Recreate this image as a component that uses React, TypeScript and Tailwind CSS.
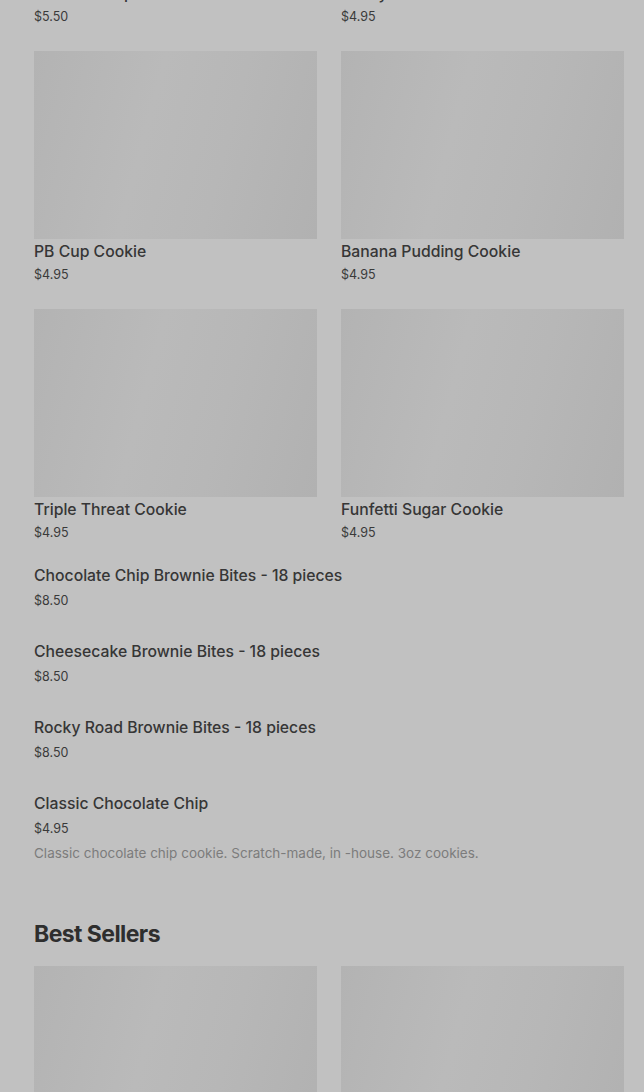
const cookies = [
  { name: 'Cookie Sampler Box', price: '$5.50' },
  { name: 'Rocky Road Marshmallow', price: '$4.95' },
  { name: 'PB Cup Cookie', price: '$4.95' },
  { name: 'Banana Pudding Cookie', price: '$4.95' },
  { name: 'Triple Threat Cookie', price: '$4.95' },
  { name: 'Funfetti Sugar Cookie', price: '$4.95' },
];

const listItems = [
  { name: 'Chocolate Chip Brownie Bites - 18 pieces', price: '$8.50' },
  { name: 'Cheesecake Brownie Bites - 18 pieces', price: '$8.50' },
  { name: 'Rocky Road Brownie Bites - 18 pieces', price: '$8.50' },
  {
    name: 'Classic Chocolate Chip',
    price: '$4.95',
    description: 'Classic chocolate chip cookie. Scratch-made, in -house. 3oz cookies.',
  },
];

const Placeholder = () => (
  <div className="h-[188px] w-full bg-[linear-gradient(105deg,#b3b3b3_0%,#bababa_40%,#b7b7b7_65%,#b1b1b1_100%)]" />
);

const Card = ({ name, price, noImage = false }: { name: string; price: string; noImage?: boolean }) => (
  <div className="flex flex-col">
    {!noImage && <Placeholder />}
    <div className="text-[15.75px] leading-[26px] font-medium text-[#363636] whitespace-nowrap">{name}</div>
    <div className="text-[12.5px] leading-[20px] text-[#3a3a3a]">{price}</div>
  </div>
);

export default function App() {
  return (
    <div
      className="min-h-[1092px] overflow-hidden bg-[#c1c1c1] pl-[34px] pr-[20px]"
      style={{ fontFamily: 'Inter, "Noto Sans", sans-serif' }}
    >
      <div className="-mt-[19px] grid grid-cols-2 gap-x-[24px] gap-y-[24px]">
        <Card name={cookies[0].name} price={cookies[0].price} noImage />
        <Card name={cookies[1].name} price={cookies[1].price} noImage />
        {cookies.slice(2).map((c) => (
          <Card key={c.name} name={c.name} price={c.price} />
        ))}
      </div>

      <div className="mt-[21px] flex flex-col gap-[29px]">
        {listItems.map((item) => (
          <div key={item.name} className="flex flex-col">
            <div className="text-[15.75px] leading-[24px] font-medium text-[#363636]">{item.name}</div>
            <div className="mt-[3px] text-[12.5px] leading-[20px] text-[#3a3a3a]">{item.price}</div>
            {item.description && (
              <div className="mt-[4px] text-[13.5px] leading-[20px] text-[#7c7c7c]">{item.description}</div>
            )}
          </div>
        ))}
      </div>

      <h2 className="mt-[55px] text-[23px] leading-[32px] font-bold tracking-tight text-[#2e2e2e]">Best Sellers</h2>

      <div className="mt-[16px] grid grid-cols-2 gap-x-[24px]">
        <Placeholder />
        <Placeholder />
      </div>
    </div>
  );
}
